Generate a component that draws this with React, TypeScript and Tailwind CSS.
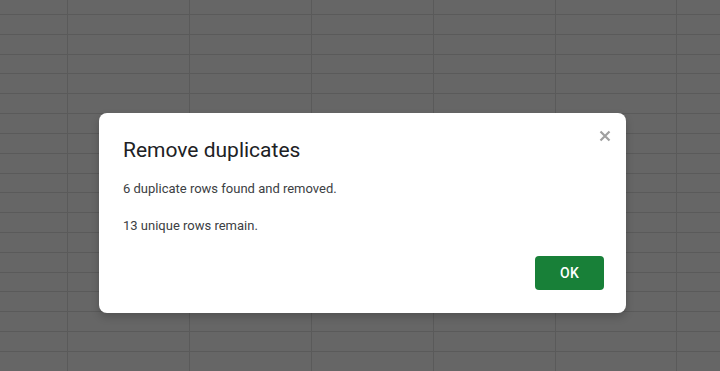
import React from 'react';

const rows = Array.from({ length: 19 });
const cols = [68, 122, 122, 122, 122, 121, 122];

const SheetBackdrop: React.FC = () => (
  <div className="w-full h-full overflow-hidden bg-[#666666]">
    <div className="flex flex-col -mt-[4.8px]">
      {rows.map((_, r) => (
        <div key={r} className="flex h-[19.82px] border-b border-[#5a5a5a] shrink-0">
          {cols.map((w, c) => (
            <div
              key={c}
              style={{ width: w }}
              className="h-full shrink-0 border-r border-[#5a5a5a]"
            />
          ))}
        </div>
      ))}
    </div>
  </div>
);

export default function App() {
  return (
    <div className="relative w-[720px] h-[371px] overflow-hidden font-['Roboto','Liberation_Sans',sans-serif]">
      <SheetBackdrop />

      {/* Dialog */}
      <div className="absolute left-[99px] top-[113px] w-[527px] h-[200px] bg-white rounded-lg shadow-[0_4px_8px_rgba(0,0,0,0.2)] flex flex-col pl-6 pr-[22px] pt-[23px] pb-[23px]">
        <div className="flex justify-between items-start">
          <div className="text-[21px] leading-[28px] text-[#202124]">Remove duplicates</div>
          <svg width="12" height="12" viewBox="0 0 12 12" className="mt-[-6px] mr-[-7px]">
            <path d="M1.5 1.5 L10.5 10.5 M10.5 1.5 L1.5 10.5" stroke="#a0a0a0" strokeWidth="2.2" />
          </svg>
        </div>
        <div className="mt-[15px] text-[13px] leading-[20px] text-[#3c4043]">6 duplicate rows found and removed.</div>
        <div className="mt-[17px] text-[13px] leading-[20px] text-[#3c4043]">13 unique rows remain.</div>
        <div className="flex-1 flex justify-end items-end">
          <button className="w-[69px] h-[34px] rounded bg-[#188038] text-white text-[14px] font-medium tracking-[0.3px]">
            OK
          </button>
        </div>
      </div>
    </div>
  );
}
